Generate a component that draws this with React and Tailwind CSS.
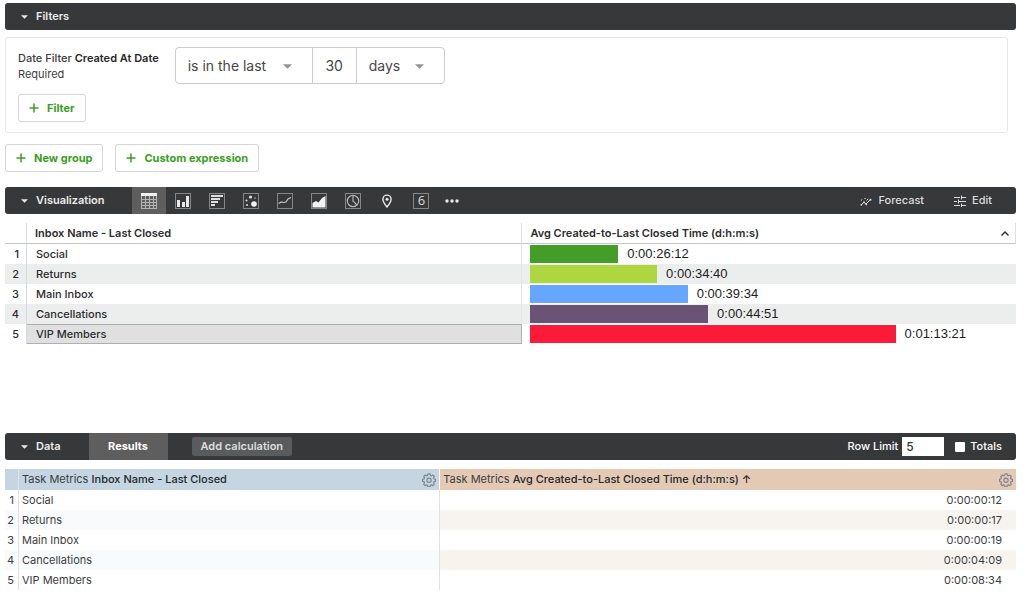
import React, { useState } from 'react';
import clsx from 'clsx';

const VIS_ROWS = [
  { name: 'Social', time: '0:00:26:12', width: 18.1, color: 'bg-[#449d27]' },
  { name: 'Returns', time: '0:00:34:40', width: 26.1, color: 'bg-[#aed640]' },
  { name: 'Main Inbox', time: '0:00:39:34', width: 32.4, color: 'bg-[#67a6ff]' },
  { name: 'Cancellations', time: '0:00:44:51', width: 36.6, color: 'bg-[#6a5475]' },
  { name: 'VIP Members', time: '0:01:13:21', width: 75.2, color: 'bg-[#fb1a37]' },
];

const DATA_ROWS = [
  { name: 'Social', time: '0:00:00:12' },
  { name: 'Returns', time: '0:00:00:17' },
  { name: 'Main Inbox', time: '0:00:00:19' },
  { name: 'Cancellations', time: '0:00:04:09' },
  { name: 'VIP Members', time: '0:00:08:34' },
];

const Caret = ({ className }) => (
  <svg viewBox="0 0 8 4" className={className} aria-hidden="true">
    <path d="M0 0h8L4 4z" fill="currentColor" />
  </svg>
);

const Frame = () => <rect x="0.5" y="0.5" width="15" height="15" fill="none" stroke="#858687" />;

const VIS_TYPES = [
  {
    label: 'Table',
    drawing: (
      <>
        <rect x="0.5" y="0.5" width="15" height="15" fill="none" stroke="#b5b5b5" />
        <path d="M0 0h16v3H0z" fill="#f2f2f2" />
        <path d="M4.5 3v13M8.5 3v13M12.5 3v13M0 6.5h16M0 9.5h16M0 12.5h16" stroke="#b5b5b5" />
      </>
    ),
  },
  {
    label: 'Column',
    drawing: (
      <>
        <Frame />
        <path d="M2 7h3v7H2zM7 9h3v5H7zM11 3h3v11h-3z" fill="#e8e8e8" />
      </>
    ),
  },
  {
    label: 'Bar',
    drawing: (
      <>
        <Frame />
        <path d="M2 2h12v2H2zM2 5h9v2H2zM2 8h7v2H2zM2 11h4v2H2z" fill="#dedede" />
      </>
    ),
  },
  {
    label: 'Scatterplot',
    drawing: (
      <>
        <Frame />
        <circle cx="11" cy="11" r="2.8" fill="#f2f2f2" />
        <circle cx="7.5" cy="4" r="1.6" fill="#dedede" />
        <circle cx="3.5" cy="7.5" r="1" fill="#dedede" />
        <circle cx="4" cy="12" r="1" fill="#dedede" />
        <circle cx="12" cy="5" r="0.8" fill="#b5b5b5" />
      </>
    ),
  },
  {
    label: 'Line',
    drawing: (
      <>
        <Frame />
        <path d="M1.5 10.5l3-1.5 2 .5 2.500-.5 2-3L14 4.500" fill="none" stroke="#c8c8c8" strokeWidth="1.2" />
      </>
    ),
  },
  {
    label: 'Area',
    drawing: (
      <>
        <Frame />
        <path d="M1.5 14.5V10L5 8l2.5 1.5L11 5l3.5-2v11.5z" fill="#f2f2f2" />
      </>
    ),
  },
  {
    label: 'Pie',
    drawing: (
      <>
        <Frame />
        <circle cx="8" cy="8" r="5.7" fill="none" stroke="#b5b5b5" strokeWidth="1.2" />
        <path d="M8 2.3V8l4 4.2" fill="none" stroke="#b5b5b5" strokeWidth="1.2" />
      </>
    ),
  },
  {
    label: 'Map',
    drawing: (
      <>
        <path
          d="M8 14C5.5 10.9 3.9 8.600 3.9 6.200a4.1 4.1 0 0 1 8.2 0C12.1 8.6 10.5 10.9 8 14z"
          fill="none"
          stroke="#e8e8e8"
          strokeWidth="1.4"
        />
        <circle cx="8" cy="6.2" r="1.5" fill="#e8e8e8" />
      </>
    ),
  },
];

const ForecastIcon = () => (
  <svg viewBox="0 0 12 12" className="size-3" fill="none" stroke="currentColor" aria-hidden="true">
    <path d="M1 10l3-2.7 2 1.7 4.5-4.5" />
    <circle cx="1.3" cy="9.8" r="0.9" fill="currentColor" stroke="none" />
    <circle cx="4" cy="7.2" r="0.9" fill="currentColor" stroke="none" />
    <circle cx="6.3" cy="9.3" r="0.9" fill="currentColor" stroke="none" />
    <circle cx="10.5" cy="4.7" r="1" fill="currentColor" stroke="none" />
    <path d="M1 5.5l1.2-1M4.5 3.5h1.2M6.5 5.5l1.7-1.7" />
  </svg>
);

const TuneIcon = () => (
  <svg viewBox="0 0 12 12" className="size-3" fill="none" stroke="currentColor" aria-hidden="true">
    <path d="M0 2.5h6M8 2.5h4M7.5 0.5v4M0 6.5h3M5 6.5h7M4.5 4.5v4M0 10.5h6M8 10.5h4M7.5 8.5v3.5" />
  </svg>
);

const GearIcon = () => (
  <svg viewBox="0 0 24 24" className="size-3.5" fill="none" stroke="currentColor" strokeWidth="2" aria-hidden="true">
    <path
      strokeLinejoin="round"
      d="M10.2 1.5h3.6l.7 2.7 1.7.7 2.4-1.4 2.5 2.5-1.4 2.4.7 1.7 2.7.7v3.6l-2.7.7-.7 1.7 1.4 2.4-2.5 2.5-2.4-1.4-1.7.7-.7 2.7h-3.6l-.7-2.7-1.7-.7-2.4 1.4-2.5-2.5 1.4-2.4-.7-1.7-2.7-.7v-3.6l2.7-.7.7-1.7-1.4-2.4 2.5-2.5 2.4 1.4 1.7-.7z"
    />
    <circle cx="12" cy="12.5" r="3.7" />
  </svg>
);

const PanelBar = ({ title, children }) => (
  <div className="flex h-[27px] items-center rounded-[3px] bg-[#373839] text-[11px] font-medium text-[#dcdcdc]">
    <button type="button" className="flex items-center gap-2 pl-4 font-semibold text-white/90">
      <Caret className="h-1 w-[7px]" />
      {title}
    </button>
    {children}
  </div>
);

const AddButton = ({ children }) => (
  <button
    type="button"
    className="flex h-7 items-center gap-2 rounded-[3px] border border-[#d3d5d6] px-2.5 text-[11px] font-bold text-[#3a9f22]"
  >
    <svg viewBox="0 0 10 10" className="size-2.5" aria-hidden="true">
      <path d="M5 0.5v9M0.5 5h9" stroke="currentColor" strokeWidth="1.5" />
    </svg>
    {children}
  </button>
);

const FilterSelect = ({ label, options, className }) => (
  <div className={clsx('relative flex', className)}>
    <select aria-label={label} className="w-full appearance-none bg-transparent pl-3 outline-none">
      {options.map((option) => (
        <option key={option}>{option}</option>
      ))}
    </select>
    <Caret className="pointer-events-none absolute top-4 right-5 h-[5px] w-[9px] text-[#939393]" />
  </div>
);

const Filters = () => (
  <section>
    <PanelBar title="Filters" />
    <div className="mt-[7px] mr-2 rounded-[3px] border border-[#e6e7e8] px-3 pt-[9px] pb-2.5">
      <div className="flex gap-4">
        <div className="pt-[3px] text-[11px] leading-4 text-[#3c3d3e]">
          <div className="font-medium">
            Date Filter <span className="font-semibold text-[#262728]">Created At Date</span>
          </div>
          <div>Required</div>
        </div>
        <div className="flex h-[37px] divide-x divide-[#c9cdce] rounded-[4px] border border-[#c9cdce] text-sm text-[#454647]">
          <FilterSelect label="Condition" options={['is in the last', 'is before', 'is on']} className="w-[137px]" />
          <input aria-label="Amount" defaultValue="30" className="w-11 text-center outline-none" />
          <FilterSelect label="Unit" options={['days', 'weeks', 'months']} className="w-[87px]" />
        </div>
      </div>
      <div className="mt-2.5 flex">
        <AddButton>Filter</AddButton>
      </div>
    </div>
    <div className="mt-[11px] flex gap-3">
      <AddButton>New group</AddButton>
      <AddButton>Custom expression</AddButton>
    </div>
  </section>
);

const Visualization = () => {
  const [active, setActive] = useState('Table');

  return (
    <section className="mt-[15px]">
      <PanelBar title="Visualization">
        <div className="ml-7 flex self-stretch">
          {VIS_TYPES.map(({ label, drawing }) => (
            <button
              key={label}
              type="button"
              aria-label={label}
              onClick={() => setActive(label)}
              className={clsx(
                'flex w-[34px] items-center justify-center',
                active === label && 'bg-[#5e5e5e]'
              )}
            >
              <svg viewBox="0 0 16 16" className="size-4" aria-hidden="true">
                {drawing}
              </svg>
            </button>
          ))}
          <button type="button" aria-label="Single value" className="flex w-[34px] items-center justify-center">
            <span className="flex size-4 items-center justify-center border border-[#858687] font-[Open_Sans,sans-serif] text-[13px] leading-none">
              6
            </span>
          </button>
          <button type="button" aria-label="More" className="flex w-7 items-center justify-center">
            <svg viewBox="0 0 14 4" className="h-1 w-3.5" fill="#e8e8e8" aria-hidden="true">
              <circle cx="2" cy="2" r="1.7" />
              <circle cx="7" cy="2" r="1.7" />
              <circle cx="12" cy="2" r="1.7" />
            </svg>
          </button>
        </div>
        <div className="ml-auto flex gap-[30px] pr-6">
          <button type="button" className="flex items-center gap-1.5">
            <ForecastIcon />
            Forecast
          </button>
          <button type="button" className="flex items-center gap-1.5">
            <TuneIcon />
            Edit
          </button>
        </div>
      </PanelBar>

      <table className="mt-[9px] w-full table-fixed border-separate border-spacing-0 text-left text-[11px] font-medium text-[#2b2c2d]">
        <thead>
          <tr className="h-[21px]">
            <th className="w-[22px] border-r border-b border-r-[#dcdedf] border-b-[#c4c6c8]" aria-label="Row" />
            <th className="w-[49%] border-r border-b border-r-[#dcdedf] border-b-[#c4c6c8] pl-2 font-semibold">
              Inbox Name - Last Closed
            </th>
            <th className="border-r border-b border-r-[#dcdedf] border-b-[#c4c6c8] pr-1.5 pl-2 font-semibold">
              <div className="flex items-center justify-between">
                Avg Created-to-Last Closed Time (d:h:m:s)
                <svg viewBox="0 0 8 5" className="h-[5px] w-2" aria-hidden="true">
                  <path d="M0.5 4.5L4 1l3.5 3.5" fill="none" stroke="currentColor" strokeWidth="1.4" />
                </svg>
              </div>
            </th>
          </tr>
        </thead>
        <tbody>
          {VIS_ROWS.map((row, i) => (
            <tr key={row.name} className="h-5 even:bg-[#eceeee]">
              <td className="border-r border-[#d3d9df] pr-[7px] text-right">{i + 1}</td>
              <td
                className={clsx(
                  'pl-[9px]',
                  i === VIS_ROWS.length - 1
                    ? 'border border-l-0 border-[#adafb1] bg-[#e0e0e0]'
                    : 'border-r border-[#e3e5e6]'
                )}
              >
                {row.name}
              </td>
              <td className="pl-2">
                <div className="flex items-center gap-[9px]">
                  <div className={clsx('h-[18px]', row.color)} style={{ width: `${row.width}%` }} />
                  <span className="font-[Liberation_Sans,Arial,sans-serif] text-[13px] leading-[18px] font-normal text-[#1c1c1c]">
                    {row.time}
                  </span>
                </div>
              </td>
            </tr>
          ))}
        </tbody>
      </table>
    </section>
  );
};

const Data = () => (
  <section className="mt-[89px]">
    <PanelBar title="Data">
      <button type="button" className="ml-7 w-[79px] self-stretch bg-[#5e5e5e] font-bold text-white">
        Results
      </button>
      <button type="button" className="ml-6 h-[19px] rounded-[2px] bg-[#5a5b5c] px-[9px] font-semibold">
        Add calculation
      </button>
      <div className="ml-auto flex items-center pr-3.5">
        <label htmlFor="row-limit" className="text-white">
          Row Limit
        </label>
        <input
          id="row-limit"
          defaultValue="5"
          className="ml-1 h-[19px] w-[42px] bg-white px-1 text-xs text-[#333435] outline-none"
        />
        <label className="ml-[11px] flex items-center gap-[5px] text-white">
          <input type="checkbox" className="size-2.5 appearance-none rounded-[1px] bg-white checked:bg-[#3a9f22]" />
          Totals
        </label>
      </div>
    </PanelBar>

    <table className="mt-[9px] w-full table-fixed border-separate border-spacing-0 text-left text-[11px] text-[#3c3d3e]">
      <thead>
        <tr className="h-[21px]">
          <th className="w-3.5 border-r border-[#dfe7ed] bg-[#c5d5e2]" aria-label="Row" />
          <th className="w-5/12 border-r border-white bg-[#c5d5e2] pr-[3px] pl-[3px] font-normal">
            <div className="flex items-center justify-between">
              <span>
                Task Metrics <span className="font-medium text-[#262728]">Inbox Name - Last Closed</span>
              </span>
              <button type="button" aria-label="Inbox Name options" className="text-[#7d858b]">
                <GearIcon />
              </button>
            </div>
          </th>
          <th className="bg-[#e4cab5] pr-[3px] pl-[3px] font-normal">
            <div className="flex items-center justify-between">
              <span>
                Task Metrics{' '}
                <span className="font-medium text-[#262728]">Avg Created-to-Last Closed Time (d:h:m:s) ↑</span>
              </span>
              <button type="button" aria-label="Closed Time options" className="text-[#7d858b]">
                <GearIcon />
              </button>
            </div>
          </th>
        </tr>
      </thead>
      <tbody>
        {DATA_ROWS.map((row, i) => (
          <tr key={row.name} className="group h-5">
            <td className="border-r border-[#dfe1e3] pr-1 text-right group-even:bg-[#f9fafc]">{i + 1}</td>
            <td className="border-r border-[#dfe1e3] pl-[3px] group-even:bg-[#f9fafc]">{row.name}</td>
            <td className="pr-3.5 text-right group-even:bg-[#f7f4f0]">{row.time}</td>
          </tr>
        ))}
      </tbody>
    </table>
  </section>
);

export default function App() {
  return (
    <main className="bg-white pt-[3px] pr-2 pl-[5px] font-[Inter,sans-serif]">
      <Filters />
      <Visualization />
      <Data />
    </main>
  );
}
